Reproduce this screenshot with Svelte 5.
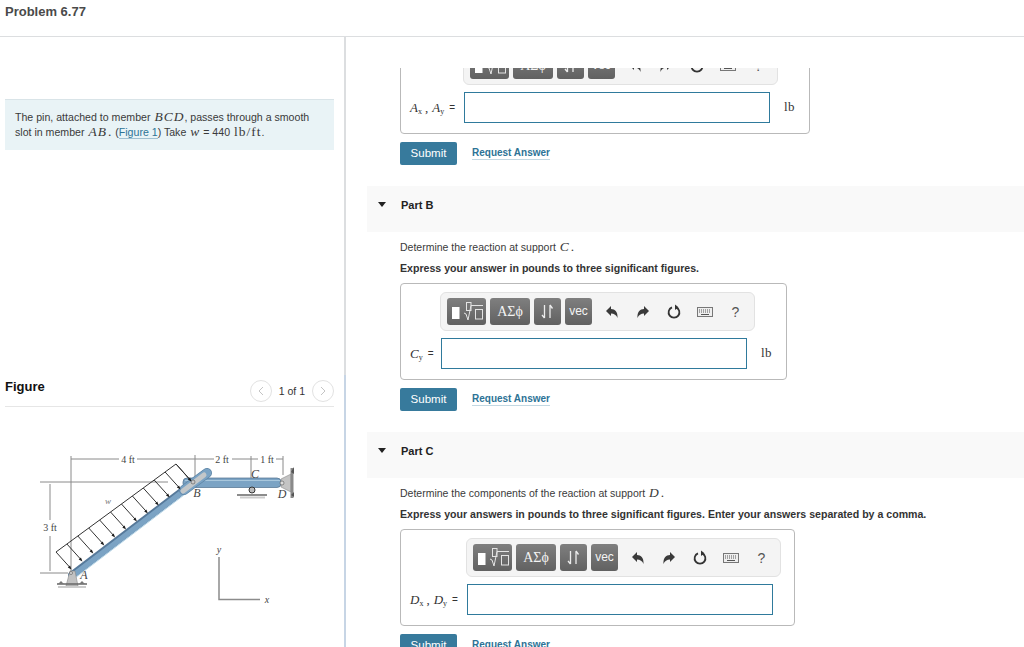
<script lang="ts">
  const arrows = Array.from({ length: 12 }, (_, i) => {
    const t = i / 11;
    const x = 56 + t * 120;
    const y = 552 - t * 88;
    return { x, y, x2: x + 15.5, y2: y + 17.5 };
  });
</script>

{#snippet toolbar()}
  <div class="toolbar">
    <span class="tool wide">
      <svg width="39" height="27" viewBox="0 0 39 27">
        <rect x="5" y="9" width="7.5" height="12" fill="#fff" />
        <rect x="19.5" y="4.5" width="4.5" height="8" fill="none" stroke="#e4e4e4" />
        <path d="M17 15l2 1 2 6 3-14.500h12" fill="none" stroke="#e4e4e4" />
        <rect x="28.500" y="11.500" width="7" height="9.500" fill="none" stroke="#e4e4e4" />
      </svg>
    </span>
    <span class="tool greek">ΑΣϕ</span>
    <span class="tool small">
      <svg width="27" height="27" viewBox="0 0 27 27">
        <path d="M10.500 7v13M8 17l2.500 3M16 20V7M16 7l2.500 3.500" fill="none" stroke="#ededed" stroke-width="1.300" />
      </svg>
    </span>
    <span class="tool small vec">vec</span>
    <span class="action first">
      <svg width="14" height="14" viewBox="0 0 14 14"><path d="M1 6l5-5v3c4 0 7 3 6.500 9-1-3-3.500-4.500-6.500-4.500V11z" fill="#3a3a3a" /></svg>
    </span>
    <span class="action">
      <svg width="14" height="14" viewBox="0 0 14 14"><path d="M13 6L8 1v3C4 4 1 7 1.500 13c1-3 3.500-4.500 6.500-4.500V11z" fill="#3a3a3a" /></svg>
    </span>
    <span class="action">
      <svg width="16" height="16" viewBox="0 0 16 16">
        <path d="M6 3.300a5.400 5.400 0 1 0 4 0" fill="none" stroke="#333" stroke-width="1.800" />
        <path d="M9 .5v5.500l3.500-2.700z" fill="#333" />
      </svg>
    </span>
    <span class="action">
      <svg width="16" height="10" viewBox="0 0 16 10">
        <rect width="16" height="10" fill="#777" />
        <rect x="1" y="1" width="14" height="8" fill="#eee" />
        <path d="M2 3h12M2 5h12" stroke="#555" stroke-dasharray="1 1" />
        <path d="M4 7.500h8" stroke="#555" />
      </svg>
    </span>
    <span class="action help">?</span>
  </div>
{/snippet}

{#snippet answer(terms: { base: string; sub: string }[], unit: string, cls: string)}
  <div class="answer {cls}">
    <div class="spacer"></div>
    {@render toolbar()}
    <div class="label">
      {#each terms as term, i}
        {#if i > 0}<span class="comma">,</span>{/if}
        <i>{term.base}</i><sub>{term.sub}</sub>
      {/each}
      <span class="equals">=</span>
    </div>
    <div class="field">
      <div class="input"></div>
      {#if unit}<span class="unit">{unit}</span>{/if}
    </div>
  </div>
{/snippet}

{#snippet actions()}
  <div class="actions">
    <span class="submit">Submit</span>
    <span class="request">Request Answer</span>
  </div>
{/snippet}

<div class="page">
  <header>Problem 6.77</header>
  <div class="body">
    <aside>
      <div class="prompt">
        The pin, attached to member <i class="math">BCD</i>, passes through a smooth slot in member <i class="math">AB</i><span class="math">.</span> (<span class="figlink">Figure 1</span>) Take <i class="math">w</i> = 440 <span class="math">lb/ft</span>.
      </div>
      <div class="figure-head">
        <strong>Figure</strong>
        <div class="pager">
          <span class="round"><svg width="8" height="10" viewBox="0 0 8 10"><path d="M6 1L2 5l4 4" fill="none" stroke="#c4c4c4" /></svg></span>
          <span class="count">1 of 1</span>
          <span class="round"><svg width="8" height="10" viewBox="0 0 8 10"><path d="M2 1l4 4-4 4" fill="none" stroke="#c4c4c4" /></svg></span>
        </div>
      </div>
      <svg class="diagram" width="280" height="170" viewBox="30 440 280 170">
        <g stroke="#8a8a8a" stroke-width="1" fill="none">
          <path d="M71 456V572M71 459H119M137 459H195M195 455V482M195 459H214M232 459H258M276 459H283M251 456V478M283 456V475" />
          <path d="M40 482H168M50 484V520M50 536V571M40 573H68" />
        </g>
        <path d="M219 557V599.500H260" fill="none" stroke="#8c8c8c" stroke-width="1.500" />
        <rect x="183" y="478" width="98" height="9.500" rx="4" fill="#7ba3c4" stroke="#4d6f8c" stroke-width=".7" />
        <path d="M185 480.500H280" stroke="#a9c7dc" />
        <path d="M72 575L206 473" stroke="#56799a" stroke-width="7.500" stroke-linecap="round" />
        <path d="M73 575.500L206 474" stroke="#7ba3c4" stroke-width="5.500" stroke-linecap="round" />
        <path d="M75 578L207 477.500" stroke="#b5d4e6" stroke-width="1" />
        <path d="M184 490L207 473" stroke="#5d85a6" stroke-width="10" stroke-linecap="round" />
        <path d="M184 490L207 473" stroke="#7ba3c4" stroke-width="8.500" stroke-linecap="round" />
        <path d="M183 491L204 475" stroke="#c3c7c9" stroke-width="5" stroke-linecap="round" />
        <circle cx="193" cy="482" r="2" fill="#c9c9c9" stroke="#555" stroke-width=".6" />
        <path d="M56 552L176 464L191 481" fill="none" stroke="#333" stroke-width="1" />
        {#each arrows as a}
          <path d="M{a.x} {a.y}L{a.x2 - 1.500} {a.y2 - 2}" stroke="#333" stroke-width="1" />
          <path d="M{a.x2} {a.y2}l-1.500-4-2.200 2z" fill="#1c1c1c" />
        {/each}
        <path d="M66 586L70 571H75L78 586Z" fill="#c2c2c2" stroke="#888" stroke-width=".6" />
        <circle cx="71" cy="573" r="1.500" fill="#ddd" stroke="#555" stroke-width=".6" />
        <path d="M57 584H87" stroke="#666" stroke-width="1.500" />
        <path d="M58 587H86" stroke="#ccc" stroke-width="2" />
        <path d="M58 584l3-3 3 3M79 584l3-3 3 3" fill="#777" />
        <circle cx="252" cy="490" r="3" fill="#bbb" stroke="#333" />
        <path d="M237 495H267" stroke="#666" stroke-width="1.500" />
        <path d="M240 497.500H265" stroke="#ccc" stroke-width="2" />
        <path d="M281 479L291 474V492L281 487Z" fill="#c4c4c4" stroke="#888" stroke-width=".6" />
        <circle cx="282" cy="483" r="2" fill="#ddd" stroke="#555" stroke-width=".6" />
        <path d="M292 468V498" stroke="#8a8a8a" stroke-width="3" />
        <path d="M294 467l-3 5 3 2zM294 492l-3 3 3 2z" fill="#555" />
        <g class="dim">
          <text x="128" y="462.500">4 ft</text>
          <text x="222" y="462.500">2 ft</text>
          <text x="267" y="462.500">1 ft</text>
          <text x="50" y="530.500">3 ft</text>
        </g>
        <g class="tag">
          <text x="84" y="579">A</text>
          <text x="197" y="497">B</text>
          <text x="255" y="478">C</text>
          <text x="282" y="498">D</text>
          <text x="108" y="504" class="thin">w</text>
          <text x="219" y="553" class="axis">y</text>
          <text x="267" y="603" class="axis">x</text>
        </g>
      </svg>
      <div class="thumb"></div>
    </aside>
    <main>
      <div class="scroll">
        <section class="part-a">
          {@render answer([{ base: "A", sub: "x" }, { base: "A", sub: "y" }], "lb", "a")}
          {@render actions()}
        </section>
        <section>
          <h3><span class="caret"></span>Part B</h3>
          <div class="content">
            <p>Determine the reaction at support <i class="math">C</i><span class="math">.</span></p>
            <p class="bold">Express your answer in pounds to three significant figures.</p>
            {@render answer([{ base: "C", sub: "y" }], "lb", "b")}
            {@render actions()}
          </div>
        </section>
        <section>
          <h3><span class="caret"></span>Part C</h3>
          <div class="content">
            <p>Determine the components of the reaction at support <i class="math">D</i><span class="math">.</span></p>
            <p class="bold">Express your answers in pounds to three significant figures. Enter your answers separated by a comma.</p>
            {@render answer([{ base: "D", sub: "x" }, { base: "D", sub: "y" }], "", "c")}
            {@render actions()}
          </div>
        </section>
      </div>
    </main>
  </div>
</div>

<style>
  :global(body) {
    margin: 0;
    background: #fff;
  }

  .page {
    width: 1024px;
    height: 647px;
    overflow: hidden;
    font-family: "Liberation Sans", Arial, sans-serif;
    font-size: 11px;
    color: #333;
    display: flex;
    flex-direction: column;
  }

  header {
    height: 37px;
    padding: 4px 0 0 5px;
    box-sizing: border-box;
    font-size: 13px;
    line-height: 15px;
    font-weight: bold;
    color: #4a4a4a;
    border-bottom: 1px solid #dcdee0;
    flex: none;
  }

  .body {
    flex: 1;
    display: flex;
    min-height: 0;
  }

  aside {
    width: 346px;
    box-sizing: border-box;
    flex: none;
    padding: 62px 10px 0 5px;
    border-right: 2px solid #dcdee0;
    position: relative;
  }

  .thumb {
    position: absolute;
    right: -2px;
    top: 338px;
    bottom: 0;
    width: 2px;
    background: #c7d5e5;
  }

  .prompt {
    height: 51px;
    box-sizing: border-box;
    padding: 10px 10px 0;
    background: #e9f3f6;
    border-top: 1px solid #d9e4e8;
    line-height: 15px;
    font-size: 10.600px;
    color: #3a3a3a;
  }

  .math {
    font-family: "Liberation Serif", serif;
    font-size: 13.500px;
    line-height: 0;
    letter-spacing: 1px;
    margin-left: 1px;
  }

  .figlink {
    color: #2d7396;
    border-bottom: 1px solid #9fc0d1;
  }

  .figure-head {
    margin-top: 225px;
    height: 32px;
    box-sizing: border-box;
    border-bottom: 1px solid #e6e6e6;
    display: flex;
    justify-content: space-between;
    align-items: flex-start;
  }

  .figure-head strong {
    font-size: 13px;
    color: #111;
    margin-top: 4px;
  }

  .pager {
    display: flex;
    align-items: center;
    gap: 7px;
    margin-top: 5px;
    color: #333;
    font-size: 10.500px;
  }

  .round {
    width: 22px;
    height: 22px;
    border: 1px solid #e2e2e2;
    border-radius: 50%;
    display: flex;
    align-items: center;
    justify-content: center;
    box-sizing: border-box;
  }

  .diagram {
    display: block;
    margin: 33px 0 0 25px;
  }

  .dim text {
    font-family: "Liberation Serif", serif;
    font-size: 10px;
    text-anchor: middle;
    fill: #444;
  }

  .tag text {
    font-family: "Liberation Serif", serif;
    font-style: italic;
    font-size: 12px;
    text-anchor: middle;
    fill: #444;
  }

  .tag .thin {
    font-size: 9px;
    fill: #777;
  }

  .tag .axis {
    font-size: 10px;
  }

  main {
    flex: 1;
    min-width: 0;
    padding-top: 31px;
  }

  .scroll {
    height: 100%;
    overflow: hidden;
    box-sizing: border-box;
  }

  .part-a {
    margin: -31px 0 0 54px;
  }

  h3 {
    margin: 21px 0 0 21px;
    height: 46px;
    box-sizing: border-box;
    padding: 13px 0 0 34px;
    background: #f9f9f9;
    font-size: 11px;
    line-height: 13px;
    color: #222;
    position: relative;
  }

  .caret {
    position: absolute;
    left: 11px;
    top: 16px;
    border: 4.500px solid transparent;
    border-top: 5px solid #222;
    border-bottom: 0;
  }

  .content {
    margin-left: 54px;
    padding-top: 8px;
  }

  p {
    margin: 0;
    height: 15px;
    line-height: 15px;
    font-size: 10.500px;
    color: #3a3a3a;
  }

  p + p {
    margin-top: 6px;
  }

  .bold {
    font-weight: bold;
    font-size: 10.600px;
    color: #333;
  }

  .answer {
    display: inline-grid;
    grid-template-columns: auto auto;
    row-gap: 7px;
    box-sizing: border-box;
    padding: 8px 13px 10px 8px;
    border: 1px solid #b9b9b9;
    border-radius: 4px;
    vertical-align: top;
  }

  .content .answer {
    margin-top: 7px;
  }

  .a .label {
    width: 54px;
  }

  .b .label {
    width: 31px;
  }

  .c .label {
    width: 57px;
  }

  .label {
    font-family: "Liberation Serif", serif;
    font-size: 13px;
    display: flex;
    align-items: center;
    white-space: nowrap;
    box-sizing: border-box;
    padding-left: 1px;
  }

  .label sub {
    font-size: 8px;
    line-height: 1;
    align-self: flex-end;
    margin-bottom: 7px;
    vertical-align: baseline;
  }

  .comma {
    margin: 0 4px 0 3px;
  }

  .equals {
    margin-left: 5px;
    font-family: "Liberation Sans", sans-serif;
    font-size: 10px;
  }

  .toolbar {
    width: 315px;
    height: 39px;
    box-sizing: border-box;
    padding: 5px 0 0 6px;
    background: #f4f4f4;
    border: 1px solid #e2e2e2;
    border-radius: 6px;
    display: flex;
    align-items: flex-start;
    gap: 4px;
  }

  .tool {
    height: 27px;
    border-radius: 3px;
    background: linear-gradient(#7f7f7f, #616161);
    color: #f4f4f4;
    display: flex;
    align-items: center;
    justify-content: center;
    flex: none;
  }

  .wide {
    width: 39px;
  }

  .greek {
    width: 40px;
    font-family: "Liberation Serif", serif;
    font-size: 14px;
  }

  .small {
    width: 27px;
  }

  .vec {
    font-size: 12px;
    padding-bottom: 1px;
    box-sizing: border-box;
  }

  .action {
    width: 27px;
    height: 27px;
    display: flex;
    align-items: center;
    justify-content: center;
    flex: none;
  }

  .action.first {
    margin-left: 2px;
  }

  .help {
    font-size: 14px;
    color: #555;
  }

  .field {
    display: flex;
    align-items: center;
    padding-left: 1px;
  }

  .input {
    width: 306px;
    height: 31px;
    box-sizing: border-box;
    border: 1px solid #2f7a9c;
    background: #fff;
  }

  .unit {
    margin: -2px 0 0 14px;
    padding-right: 1px;
    font-family: "Liberation Serif", serif;
    font-size: 13px;
    letter-spacing: 0.5px;
  }

  .actions {
    display: flex;
    align-items: center;
    gap: 15px;
    margin-top: 8px;
  }

  .submit {
    width: 57px;
    height: 23px;
    box-sizing: border-box;
    padding-bottom: 1px;
    background: #377a9c;
    color: #fff;
    border-radius: 2px;
    font-size: 11.500px;
    display: flex;
    align-items: center;
    justify-content: center;
  }

  .request {
    color: #2d7396;
    font-weight: bold;
    font-size: 10px;
    line-height: 12px;
    border-bottom: 1px solid #c3d8e2;
  }
</style>
